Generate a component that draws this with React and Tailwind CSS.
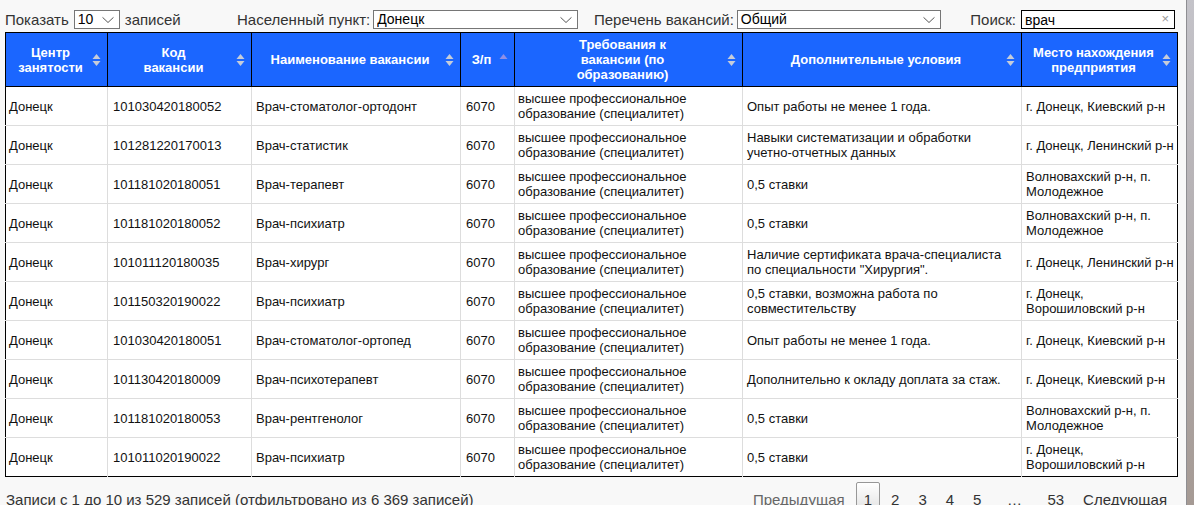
import React from 'react';

const EDU = 'высшее профессиональное образование (специалитет)';

const rows = [
  ['101030420180052', 'Врач-стоматолог-ортодонт', 'Опыт работы не менее 1 года.', 'г. Донецк, Киевский р-н'],
  ['101281220170013', 'Врач-статистик', 'Навыки систематизации и обработки учетно-отчетных данных', 'г. Донецк, Ленинский р-н'],
  ['101181020180051', 'Врач-терапевт', '0,5 ставки', 'Волновахский р-н, п. Молодежное'],
  ['101181020180052', 'Врач-психиатр', '0,5 ставки', 'Волновахский р-н, п. Молодежное'],
  ['101011120180035', 'Врач-хирург', 'Наличие сертификата врача-специалиста по специальности "Хирургия".', 'г. Донецк, Ленинский р-н'],
  ['101150320190022', 'Врач-психиатр', '0,5 ставки, возможна работа по совместительству', 'г. Донецк, Ворошиловский р-н'],
  ['101030420180051', 'Врач-стоматолог-ортопед', 'Опыт работы не менее 1 года.', 'г. Донецк, Киевский р-н'],
  ['101130420180009', 'Врач-психотерапевт', 'Дополнительно к окладу доплата за стаж.', 'г. Донецк, Киевский р-н'],
  ['101181020180053', 'Врач-рентгенолог', '0,5 ставки', 'Волновахский р-н, п. Молодежное'],
  ['101011020190022', 'Врач-психиатр', '0,5 ставки', 'г. Донецк, Ворошиловский р-н'],
];

const SortIcon = ({ asc }) => (
  <svg width="9" height="15" viewBox="0 0 9 15" className="absolute right-[6px] top-1/2 -translate-y-1/2">
    {asc ? (
      <path d="M4.5 1.5L8.5 6.5H0.5z" fill="#8f8fe6" />
    ) : (
      <>
        <path d="M4.5 1.5L8.5 6.5H0.5z" fill="#c6ccd9" />
        <path d="M4.5 13.5L8.5 8.5H0.5z" fill="#c6ccd9" />
      </>
    )}
  </svg>
);

const Chevron = () => (
  <svg width="12" height="7" viewBox="0 0 12 7" className="absolute right-[6px] top-1/2 -translate-y-1/2 pointer-events-none">
    <path d="M0.5 0.8L6 6L11.5 0.8" fill="none" stroke="#555" strokeWidth="1" />
  </svg>
);

const Select = ({ value, width }) => (
  <div className={`relative h-[19px] ${width}`}>
    <select
      defaultValue={value}
      className="appearance-none w-full h-full pl-[3px] pr-[16px] text-[14px] leading-[17px] text-black bg-white border border-[#767676] outline-none"
    >
      <option>{value}</option>
    </select>
    <Chevron />
  </div>
);

const Th = ({ children, asc }) => (
  <th className="relative border border-black pl-[6px] pr-[18px] py-[4px] text-center font-bold text-white text-[13px] leading-[15px] align-middle">
    {children}
    <SortIcon asc={asc} />
  </th>
);

export default function App() {
  return (
    <div className="flex h-[505px] overflow-hidden font-['Liberation_Sans',Arial,sans-serif]">
      <div className="w-[1186px] shrink-0 bg-[#f8f8f8] pl-[5px]">
        {/* filters */}
        <div className="flex items-center h-[19px] w-[1172px] mt-[10px] mb-[3px] text-[15px] leading-[17px] text-[#333]">
          <div className="flex items-center w-[232px]">
            <span>Показать</span>
            <div className="mx-[5px]">
              <Select value="10" width="w-[46px]" />
            </div>
            <span>записей</span>
          </div>
          <div className="flex items-center w-[357px]">
            <span>Населенный пункт:</span>
            <div className="ml-[3px]">
              <Select value="Донецк" width="w-[205px]" />
            </div>
          </div>
          <div className="flex items-center">
            <span>Перечень вакансий:</span>
            <div className="ml-[3px]">
              <Select value="Общий" width="w-[204px]" />
            </div>
          </div>
          <div className="flex items-center ml-auto mr-[2px]">
            <span>Поиск:</span>
            <div className="relative ml-[5px] w-[154px] h-[19px]">
              <input
                defaultValue="врач"
                className="w-full h-full pl-[3px] pr-[18px] text-[14px] text-black bg-white border border-black outline-none"
              />
              <span className="absolute right-[6px] top-[1px] text-[13px] leading-[16px] text-[#999]">×</span>
            </div>
          </div>
        </div>

        {/* table */}
        <table className="w-[1172px] table-fixed border-collapse border border-black bg-white">
          <colgroup>
            <col className="w-[102px]" />
            <col className="w-[144px]" />
            <col className="w-[209px]" />
            <col className="w-[54px]" />
            <col className="w-[228px]" />
            <col className="w-[279px]" />
            <col className="w-[156px]" />
          </colgroup>
          <thead className="bg-[#1b66ff]">
            <tr>
              <Th>Центр<br />занятости</Th>
              <Th>Код<br />вакансии</Th>
              <Th>Наименование вакансии</Th>
              <Th asc>З/п</Th>
              <Th>Требования к<br />вакансии (по<br />образованию)</Th>
              <Th>Дополнительные условия</Th>
              <Th>Место нахождения<br />предприятия</Th>
            </tr>
          </thead>
          <tbody className="text-[13px] leading-[15px] text-[#111]">
            {rows.map((r, i) => {
              const last = i === rows.length - 1;
              const b = last ? 'border-l border-[#ddd]' : 'border-l border-b border-[#ddd]';
              return (
                <tr key={i}>
                  <td className={`${last ? '' : 'border-b border-[#ddd]'} pl-[3px] pr-[5px] py-[4px] align-middle`}>Донецк</td>
                  <td className={`${b} px-[5px] py-[4px] align-middle`}>{r[0]}</td>
                  <td className={`${b} px-[4px] py-[4px] align-middle`}>{r[1]}</td>
                  <td className={`${b} px-[5px] py-[4px] align-middle`}>6070</td>
                  <td className={`${b} px-[3px] py-[4px] align-middle`}>{EDU}</td>
                  <td className={`${b} px-[4px] py-[4px] align-middle`}>{r[2]}</td>
                  <td className={`${b} pl-[4px] pr-0 py-[4px] align-middle`}>{r[3]}</td>
                </tr>
              );
            })}
          </tbody>
        </table>

        {/* footer */}
        <div className="flex justify-between items-start w-[1172px] mt-[5px] text-[15px] leading-[20px] text-[#333]">
          <div className="pt-[8px] pl-[1px]">Записи с 1 до 10 из 529 записей (отфильтровано из 6 369 записей)</div>
          <div className="flex items-start mr-[2px]">
            <span className="px-[8px] pt-[8px] pb-[7px] text-[#666]">Предыдущая</span>
            <span className="ml-[3px] px-[7px] pt-[7px] pb-[7px] border border-[#979797] rounded-[2px] bg-gradient-to-b from-white to-[#dcdcdc] text-[#333]">1</span>
            {['2', '3', '4', '5'].map((n) => (
              <span key={n} className="ml-[3px] px-[7px] pt-[7px] pb-[7px] border border-transparent">{n}</span>
            ))}
            <span className="ml-[3px] w-[44px] pt-[8px] text-center">…</span>
            <span className="ml-[3px] px-[7px] pt-[7px] pb-[7px] border border-transparent">53</span>
            <span className="ml-[3px] px-[8px] pt-[8px] pb-[7px]">Следующая</span>
          </div>
        </div>
      </div>
      <div className="flex-1 border-l border-[#8e8e92] bg-gradient-to-b from-[#c4c3c9] via-[#b3aeb0] to-[#a59a94]" />
    </div>
  );
}
